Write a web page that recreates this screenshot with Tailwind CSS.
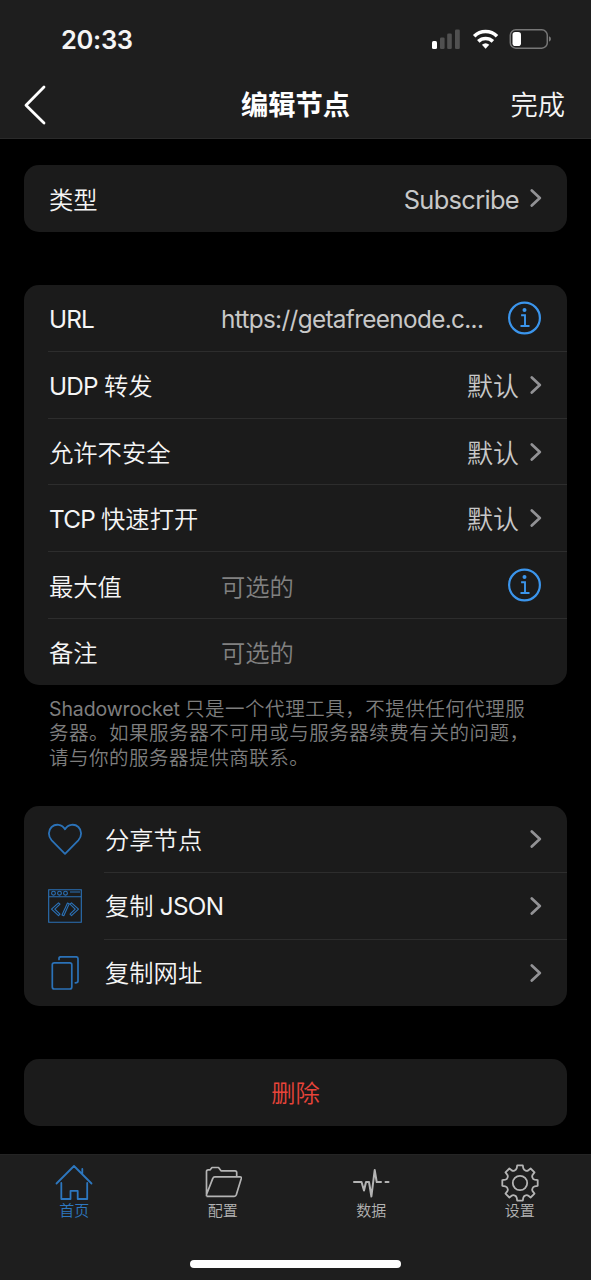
<!DOCTYPE html>
<html lang="zh-CN">
<head>
<meta charset="utf-8">
<title>编辑节点</title>
<script src="https://cdn.jsdelivr.net/npm/@tailwindcss/browser@4"></script>
</head>
<body class="bg-black">
<svg class="hidden">
  <symbol id="chev" viewBox="0 0 12 20"><path d="M1.800 2.400l8 7.600-8 7.600" fill="none" stroke="#929295" stroke-width="2.700" stroke-linecap="round" stroke-linejoin="round"/></symbol>
  <symbol id="info" viewBox="0 0 34 34"><g fill="none" stroke="#3b95ec"><circle cx="16.500" cy="17" r="15.400" stroke-width="2.200"/><path d="M13.100 14.300H17v10.500M12.500 25h9" stroke-width="1.900"/></g><circle cx="16.500" cy="9" r="2" fill="#3b95ec"/></symbol>
</svg>
<div class="flex h-[1280px] w-[591px] flex-col overflow-hidden bg-black font-['Inter','Noto_Sans_CJK_SC',sans-serif] text-[24.3px] font-[350] leading-none text-[#f5f5f5]">
  <header class="flex h-[139px] shrink-0 flex-col border-b border-[#2a2a2a] bg-[#1e1e1e]">
    <div class="flex h-[78px] items-center pl-[61px] pr-[40px]">
      <span class="pt-0.5 text-[25.500px] font-semibold tracking-[-0.3px]">20:33</span>
      <svg class="ml-auto h-[22px] w-[120px]" viewBox="0 0 120 22">
        <rect x="1" y="13" width="5" height="8" rx="1.5" fill="#fff"/>
        <g fill="#505050"><rect x="9" y="9.5" width="4.6" height="11.5" rx="1.3"/><rect x="16.2" y="5.5" width="4.6" height="15.5" rx="1.3"/><rect x="24" y="1.5" width="4.8" height="19.5" rx="1.3"/></g>
        <g fill="none" stroke="#fff" stroke-width="3.6"><path d="M43.2 8.2a16.2 16.2 0 0 1 22.8 0"/><path d="M47.3 13.4a10.6 10.6 0 0 1 14.6 0"/></g>
        <path d="M54.6 20.8l-3.7-4a5.6 5.6 0 0 1 7.4 0z" fill="#fff"/>
        <rect x="79.3" y="1.8" width="37" height="18.4" rx="5.5" fill="none" stroke="#777" stroke-width="1.5" />
        <rect x="81.5" y="4" width="8.5" height="14" rx="2.8" fill="#fff"/>
        <path d="M118 8.3q2 .8 2 2.7t-2 2.700z" fill="#777"/>
      </svg>
    </div>
    <div class="grid h-[54px] grid-cols-3 items-center pl-[25px] pr-[25px]">
      <svg class="-ml-px h-10 w-[22px]" viewBox="0 0 22 40"><path d="M20 2L2 20.3 20 38" fill="none" stroke="#fff" stroke-width="2.8" stroke-linecap="round" stroke-linejoin="round"/></svg>
      <h1 class="pt-0.5 text-center text-[27.3px] font-bold text-white">编辑节点</h1>
      <span class="pt-0.5 pr-px text-right text-[27.3px]">完成</span>
    </div>
  </header>

  <main class="flex grow flex-col px-6">
    <section class="mt-[26px] flex h-[66.5px] items-center rounded-[15px] bg-[#1b1b1b] px-[25px]">
      <span class="pt-[3px]">类型</span>
      <span class="ml-auto pt-0.5 text-[25.4px] font-normal tracking-[-0.65px] text-[#c8c8c8]">Subscribe</span>
      <svg class="ml-[11px] h-5 w-3"><use href="#chev"/></svg>
    </section>

    <section class="mt-[53.5px] flex h-[400px] flex-col rounded-[15px] bg-[#1b1b1b] pl-6">
      <div class="flex flex-1 items-center border-b border-[#2d2d2d] pl-px pr-[25px]"><span class="w-[172px] pt-0.5 font-normal tracking-[-0.8px]">URL</span><span class="whitespace-nowrap pt-0.5 font-normal tracking-[-0.65px] text-[#c8c8c8]">https://getafreenode.c...</span><svg class="ml-auto size-[34px]"><use href="#info"/></svg></div>
      <div class="flex flex-1 items-center border-b border-[#2d2d2d] pl-px pr-[25px]"><span class="pt-0.5"><span class="font-normal tracking-[-0.75px]">UDP </span>转发</span><span class="ml-auto pt-1 text-[26px] text-[#c8c8c8]">默认</span><svg class="ml-[11px] h-5 w-3"><use href="#chev"/></svg></div>
      <div class="flex flex-1 items-center border-b border-[#2d2d2d] pl-px pr-[25px]"><span class="pt-[3px]">允许不安全</span><span class="ml-auto pt-1 text-[26px] text-[#c8c8c8]">默认</span><svg class="ml-[11px] h-5 w-3"><use href="#chev"/></svg></div>
      <div class="flex flex-1 items-center border-b border-[#2d2d2d] pl-px pr-[25px]"><span class="pt-0.5"><span class="font-normal tracking-[-0.75px]">TCP </span>快速打开</span><span class="ml-auto pt-1 text-[26px] text-[#c8c8c8]">默认</span><svg class="ml-[11px] h-5 w-3"><use href="#chev"/></svg></div>
      <div class="flex flex-1 items-center border-b border-[#2d2d2d] pl-px pr-[25px]"><span class="w-[172px] pt-[3px]">最大值</span><span class="pt-[3px] text-[#818181]">可选的</span><svg class="ml-auto size-[34px]"><use href="#info"/></svg></div>
      <div class="flex flex-1 items-center pl-px pr-[25px]"><span class="w-[172px] pt-0.5">备注</span><span class="pt-0.5 text-[#818181]">可选的</span></div>
    </section>

    <p class="mt-[12px] whitespace-nowrap pl-[25px] text-[19.5px] leading-[24.4px] tracking-[0.52px] text-[#7e7e7e]"><span class="font-normal tracking-[-0.12px]">Shadowrocket </span>只是一个代理工具，不提供任何代理服<br>务器。如果服务器不可用或与服务器续费有关的问题，<br>请与你的服务器提供商联系。</p>

    <section class="mt-[36px] flex h-[200px] flex-col rounded-[15px] bg-[#1b1b1b] pl-6">
      <div class="flex flex-1 items-center">
        <svg class="h-[34px] w-[34px]" viewBox="0 0 34 34" fill="none" stroke="#2b72b8" stroke-width="1.8" stroke-linejoin="round"><path d="M17 30.800L3.700 17.300C-.2 13 .2 7.300 3.600 4 7.500.5 14 1 17 6.300 20 1 26.500.5 30.400 4c3.400 3.300 3.800 9-.1 13.300z"/></svg>
        <div class="ml-[22px] flex h-full grow items-center border-b border-[#2d2d2d] pl-px pr-[25px]"><span class="pt-0.5">分享节点</span><svg class="ml-auto h-5 w-3"><use href="#chev"/></svg></div>
      </div>
      <div class="flex flex-1 items-center">
        <svg class="h-[34px] w-[34px]" viewBox="0 0 34 34" fill="none" stroke="#2b72b8" stroke-width="1.1"><path d="M.7.7h32.6v32.6H.7zM.7 7.7h32.6M22 3h10"/><circle cx="5.500" cy="4.200" r="1.900"/><circle cx="11.500" cy="4.200" r="1.900"/><circle cx="17.500" cy="4.200" r="1.900"/><path stroke-linejoin="round" d="M10.500 13.800l1.500 1.400-5.200 5 5.200 5-1.500 1.500-7-6.500zM23.500 13.800l-1.500 1.400 5.200 5-5.200 5 1.500 1.500 7-6.500zM19.500 14l1.700.7-5.400 12-1.800-.8z"/></svg>
        <div class="ml-[22px] flex h-full grow items-center border-b border-[#2d2d2d] pl-px pr-[25px]"><span class="pt-px">复制<span class="font-normal tracking-[-0.7px]"> JSON</span></span><svg class="ml-auto h-5 w-3"><use href="#chev"/></svg></div>
      </div>
      <div class="flex flex-1 items-center">
        <svg class="h-[34px] w-[34px]" viewBox="0 0 34 34" fill="none" stroke="#2b72b8" stroke-width="1.7" stroke-linecap="round" stroke-linejoin="round"><rect x="4.300" y="6.800" width="19.500" height="26.200" rx="2"/><path d="M11 3.500V2.500q0-1.700 1.800-1.700H28q2 0 2 2v22.200q0 1.800-2.700 1.800"/></svg>
        <div class="ml-[22px] flex h-full grow items-center pl-px pr-[25px]"><span class="pt-px">复制网址</span><svg class="ml-auto h-5 w-3"><use href="#chev"/></svg></div>
      </div>
    </section>

    <section class="mt-[53px] flex h-[67px] items-center justify-center rounded-[15px] bg-[#1b1b1b] text-[#e8443a]">删除</section>
  </main>

  <nav class="flex h-[126px] shrink-0 flex-col border-t border-[#242424] bg-[#1e1e1e] text-[15px] text-[#b4b4b4]">
    <div class="-mr-[3px] grid grid-cols-4 pt-[9px]">
      <div class="flex flex-col items-center text-[#2d77bf]">
        <svg class="h-[38px] w-[38px]" viewBox="0 0 38 38" fill="none" stroke="currentColor" stroke-width="1.8" stroke-linecap="round" stroke-linejoin="round"><path d="M1.500 19.500L19 2l17.500 17.500M27.300 9.500V5M6.300 19v16h9.200v-8.200h7.200V35h9.500V19"/></svg><span class="mt-px">首页</span>
      </div>
      <div class="flex flex-col items-center">
        <svg class="h-[38px] w-[38px]" viewBox="0 0 38 38" fill="none" stroke="currentColor" stroke-width="1.700" stroke-linejoin="round"><path d="M2.500 32.300V7.500q0-1.700 1.700-1.700h2l1.800-2.300h6.500l2.500 3.300h14q1.700 0 1.700 1.700v4.300M2.500 32.300h27.800q1.500 0 2-1.500l5-16.300q.4-1.600-1.300-1.600H10.800q-1.500 0-2 1.500L2.300 31"/></svg><span class="mt-px">配置</span>
      </div>
      <div class="flex flex-col items-center">
        <svg class="h-[38px] w-[38px]" viewBox="0 0 38 38" fill="none" stroke="currentColor" stroke-width="2" stroke-linecap="round" stroke-linejoin="round"><path d="M2 18h7.500l2.500 8.500L14 18h3l2.400 14.500L22.700 6l2 12H29M33.500 18h3"/></svg><span class="mt-px">数据</span>
      </div>
      <div class="flex flex-col items-center">
        <svg class="h-[38px] w-[38px]" viewBox="0 0 38 38" fill="none" stroke="currentColor" stroke-width="1.800" stroke-linejoin="round"><circle cx="19" cy="19" r="7.200"/><path d="M16.200 1.300H21.800L22.300 4.300Q22.700 6 24.600 6.600Q26.200 7.200 27.400 6.200L29.600 4.500L33.500 8.400L31.800 10.600Q30.800 11.800 31.400 13.400Q32 15.300 33.700 15.700L36.700 16.200V21.800L33.700 22.300Q32 22.700 31.400 24.600Q30.800 26.200 31.800 27.400L33.500 29.600L29.600 33.500L27.400 31.800Q26.200 30.800 24.600 31.400Q22.700 32 22.300 33.700L21.800 36.700H16.200L15.700 33.700Q15.300 32 13.400 31.400Q11.800 30.800 10.600 31.800L8.400 33.500L4.500 29.600L6.200 27.400Q7.200 26.200 6.600 24.600Q6 22.700 4.300 22.300L1.300 21.800V16.200L4.300 15.700Q6 15.300 6.600 13.400Q7.200 11.800 6.200 10.600L4.500 8.400L8.400 4.500L10.600 6.200Q11.800 7.200 13.400 6.600Q15.300 6 15.700 4.300Z"/></svg><span class="mt-px">设置</span>
      </div>
    </div>
    <div class="mx-auto mt-auto mb-3 h-2 w-[211px] rounded-full bg-white"></div>
  </nav>
</div>
</body>
</html>
